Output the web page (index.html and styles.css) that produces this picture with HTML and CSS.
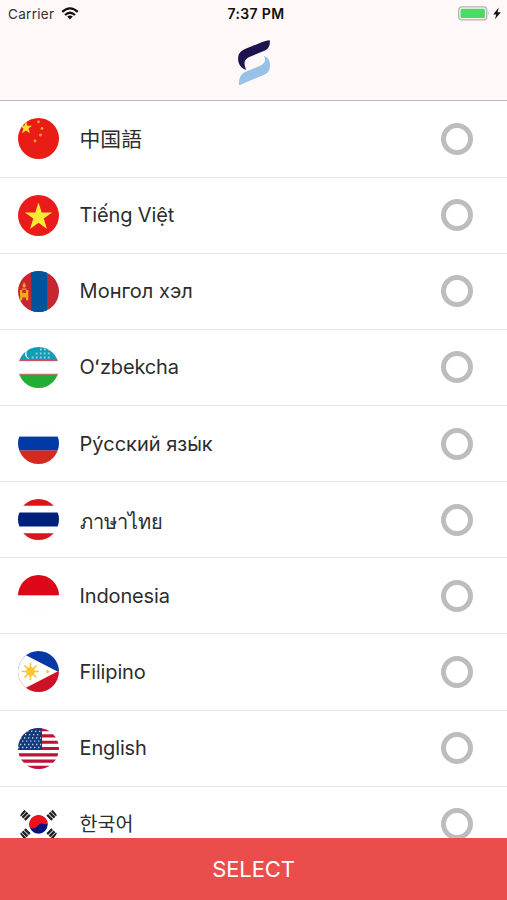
FILE: index.html
```html
<!DOCTYPE html>
<html lang="en">
<head>
<meta charset="utf-8">
<title>Language</title>
<link rel="stylesheet" href="styles.css">
</head>
<body>
<div class="app">
  <header class="header">
    <div class="status">
      <div class="status-left"><span class="carrier">Carrier</span>
        <svg class="wifi" width="18" height="13" viewBox="0 0 18 13"><g fill="none" stroke="#111" stroke-width="2.3"><path d="M1.2 4.9Q9-2.1 16.8 4.9"/><path d="M4 8Q9 3.4 14 8"/></g><path d="M6.2 9.6Q9 7.4 11.8 9.6L9 12.4Z" fill="#111"/></svg>
      </div>
      <span class="time">7:37 PM</span>
      <div class="status-right">
        <svg width="44" height="16" viewBox="0 0 44 16"><rect x=".7" y=".9" width="28" height="13" rx="3" fill="none" stroke="#b5b0b0" stroke-width="1.3"/><rect x="2.5" y="2.7" width="24.4" height="9.4" rx="1.2" fill="#4cd964"/><path d="M30.4 5.3Q32 7.4 30.4 9.5Z" fill="#aaa"/><path d="M40.8 1.6L35.2 8.6H38.2L37 13.2L42.8 6.3H39.6Z" fill="#111"/></svg>
      </div>
    </div>
    <svg class="logo" width="34" height="46" viewBox="0 0 34 46"><path d="M32.8.3C33.2 4.5 32.2 8.4 28.5 10.2L13.5 16.6C8 19 5.6 22 9.3 29.8C4 28.6 1 24 1.1 18.5C1.2 13.2 4 10.8 8 9L24 2.6C27 1.4 30 .6 32.8.3Z" fill="#1c134f"/><path d="M27 16C31 17.2 33.3 20.5 33 26C32.8 31 30.5 33.5 26 35.3L9 42.3C6 43.5 4.5 44.6 2 45.3C1.8 39 3.2 34.3 8 32.1L22.5 26C27.5 23.8 29.5 21 27 16Z" fill="#98c1e8"/></svg>
  </header>
  <main class="list">
    <div class="row">
      <svg class="flag" viewBox="0 0 41 41"><rect width="41" height="41" fill="#e91c16"/><g fill="#f9df2d"><path d="M8 3.4L9.6 7.8H14L10.5 10.6L12 15.2L8 12.4L4 15.2L5.4 10.6L2 7.8H6.4Z"/><g fill="#f5a42b"><circle cx="20.5" cy="3.8" r="1.4"/><circle cx="24" cy="10.5" r="1.4"/><circle cx="22.5" cy="17" r="1.4"/><circle cx="17" cy="23" r="1.4"/></g></g></svg>
      <span class="name zh" lang="zh">中国語</span><i class="radio"></i></div>
    <div class="row">
      <svg class="flag" viewBox="0 0 41 41"><rect width="41" height="41" fill="#e91c1b"/><path d="M20.5 7.5L23.7 17.4H34.2L25.7 23.6L29 34L20.5 27.8L12 34L15.3 23.6L6.8 17.4H17.3Z" fill="#fbea34"/></svg>
      <span class="name vi" lang="vi">Tiếng Việt</span><i class="radio"></i></div>
    <div class="row">
      <svg class="flag" viewBox="0 0 41 41"><rect width="41" height="41" fill="#c4272f"/><rect x="13.3" width="15.7" height="41" fill="#01549c"/><path d="M2 19H4.3V22H8V19H10.3V29.3H8V26.5H4.3V29.3H2ZM6.1 11L8 15L6.1 17L4.4 15ZM3.8 17.5H8.5V18.7H3.8Z" fill="#f5a720"/></svg>
      <span class="name mn" lang="mn">Монгол хэл</span><i class="radio"></i></div>
    <div class="row">
      <svg class="flag" viewBox="0 0 41 41"><rect width="41" height="41" fill="#fff"/><rect width="41" height="13.2" fill="#159bb5"/><path d="M0 13.6H41M0 27.3H41" stroke="#d4434e" stroke-width="1"/><rect y="27.8" width="41" height="14" fill="#20ae35"/><path d="M10.5 2.3A5 5 0 0 0 11.5 12A6 6 0 0 1 10.5 2.3Z" fill="#fff"/><path d="M22 2.5H32M17.8 6.5H32M13.8 10.5H32" stroke="#8fd0dc" stroke-width="1.8" stroke-dasharray="1.8 2.2"/></svg>
      <span class="name uz" lang="uz">Oʻzbekcha</span><i class="radio"></i></div>
    <div class="row">
      <svg class="flag" viewBox="0 0 41 41"><rect width="41" height="41" fill="#fefefe"/><rect y="13.6" width="41" height="14" fill="#0239a7"/><rect y="27.5" width="41" height="14" fill="#d52b1e"/></svg>
      <span class="name ru" lang="ru">Ру́сский язы́к</span><i class="radio"></i></div>
    <div class="row">
      <svg class="flag" viewBox="0 0 41 41"><rect width="41" height="41" fill="#fff"/><path d="M0 0H41V6.8H0ZM0 34.2H41V41H0Z" fill="#dc151d"/><rect y="13.5" width="41" height="14" fill="#00207b"/></svg>
      <span class="name th" lang="th">ภาษาไทย</span><i class="radio"></i></div>
    <div class="row">
      <svg class="flag" viewBox="0 0 41 41"><rect width="41" height="41" fill="#fefefe"/><rect width="41" height="20.3" fill="#dc0818"/></svg>
      <span class="name id" lang="id">Indonesia</span><i class="radio"></i></div>
    <div class="row">
      <svg class="flag" viewBox="0 0 41 41"><rect width="41" height="20.5" fill="#0739a5"/><rect y="20.5" width="41" height="20.5" fill="#cd1126"/><path d="M0 0H8V4.3L39.5 20.5L8 36.7V41H0Z" fill="#fff"/><g fill="#fac62e"><circle cx="12.5" cy="20.5" r="4.4"/><path d="M12.5 12V29M4 20.5H21M6.5 14.5L18.5 26.5M6.5 26.5L18.5 14.5" stroke="#fac62e" stroke-width="1.6"/><circle cx="29.5" cy="20.5" r="1.6"/></g></svg>
      <span class="name tl" lang="tl">Filipino</span><i class="radio"></i></div>
    <div class="row">
      <svg class="flag" viewBox="0 0 41 41"><rect width="41" height="41" fill="#fff"/><path d="M0 1.6H41M0 7.9H41M0 14.2H41M0 20.5H41M0 26.8H41M0 33.1H41M0 39.4H41" stroke="#bd1239" stroke-width="3.15"/><rect width="24" height="22" fill="#12397a"/><path d="M9 3.3H23M2 10H23M2 16.5H23M7 6.6H23M0 13.2H23M0 19.5H23" stroke="#c0cde3" stroke-width="1.3" stroke-dasharray="1.4 2.6"/></svg>
      <span class="name en" lang="en">English</span><i class="radio"></i></div>
    <div class="row">
      <svg class="flag" viewBox="0 0 41 41"><g transform="translate(20.5 20.5)"><circle r="9.2" fill="#02137f"/><path d="M-8.6 3.2A9.2 9.2 0 1 1 9.1-1.2C7.5 1.5 4.5-2.4 1.2-.5C-1.5 1.3-2.8 5.8-8.6 3.2Z" fill="#ee1119"/></g><g stroke="#222" stroke-width="2.4"><path d="M2.2 11.6L7.2 6.6M4.5 13.7L9.5 8.7M6.8 15.8L11.8 10.8M38.8 11.6L33.8 6.6M36.5 13.7L31.5 8.7M34.2 15.8L29.2 10.8M2.2 29.4L7.2 34.4M4.5 27.3L9.5 32.3M6.8 25.2L11.8 30.2M38.8 29.4L33.8 34.4M36.5 27.3L31.5 32.3M34.2 25.2L29.2 30.2"/></g></svg>
      <span class="name ko" lang="ko">한국어</span><i class="radio"></i></div>
  </main>
  <button class="select"><span>SELECT</span></button>
</div>
</body>
</html>
```
FILE: styles.css
```css
* { box-sizing: border-box; }
body { margin: 0; background: #fff; font-family: Inter, "Noto Sans", sans-serif; color: #2d2d2d; }
.app { width: 507px; height: 900px; display: flex; flex-direction: column; overflow: hidden; }
.header { flex: none; height: 101px; background: #fef8f8; border-bottom: 1px solid #bdb8ba; display: flex; flex-direction: column; align-items: center; }
.status { width: 100%; height: 27px; padding: 0 5px 0 8px; display: grid; grid-template-columns: 1fr auto 1fr; align-items: center; color: #111; font-size: 13.5px; }
.status-left { display: flex; align-items: center; gap: 7px; }
.carrier { color: #333; letter-spacing: .3px; }
.time { font-size: 14px; font-weight: 600; letter-spacing: .35px; padding-left: 2px; }
.status-right { display: flex; justify-content: flex-end; }
.logo { margin-top: 13px; }
.list { flex: 1; min-height: 0; overflow: hidden; padding-top: .4px; }
.row { height: 76.15px; padding: 0 34px 0 18.4px; border-bottom: 1px solid #e7e7e7; display: flex; align-items: center; }
.flag { width: 41px; height: 41px; flex: none; border-radius: 50%; overflow: hidden; margin-right: 20.2px; }
.name { flex: 1; font-size: 20px; white-space: nowrap; }
.vi, .uz, .id, .tl, .en { letter-spacing: -.15px; }
.zh { font-family: "Noto Sans CJK JP", sans-serif; font-size: 20.8px; line-height: 28px; padding-bottom: 1px; }
.th { padding-top: 4px; }
.ko { font-family: "Noto Sans CJK KR", sans-serif; font-size: 19.5px; line-height: 28px; padding-bottom: 2px; }
.radio { width: 32px; height: 32px; border: 5px solid #bdbdbd; border-radius: 50%; }
.select { flex: none; height: 62px; padding: 0; border: 0; background: #eb4d4c; color: #fff; font: 400 22px Inter, sans-serif; letter-spacing: -.1px; }
```
